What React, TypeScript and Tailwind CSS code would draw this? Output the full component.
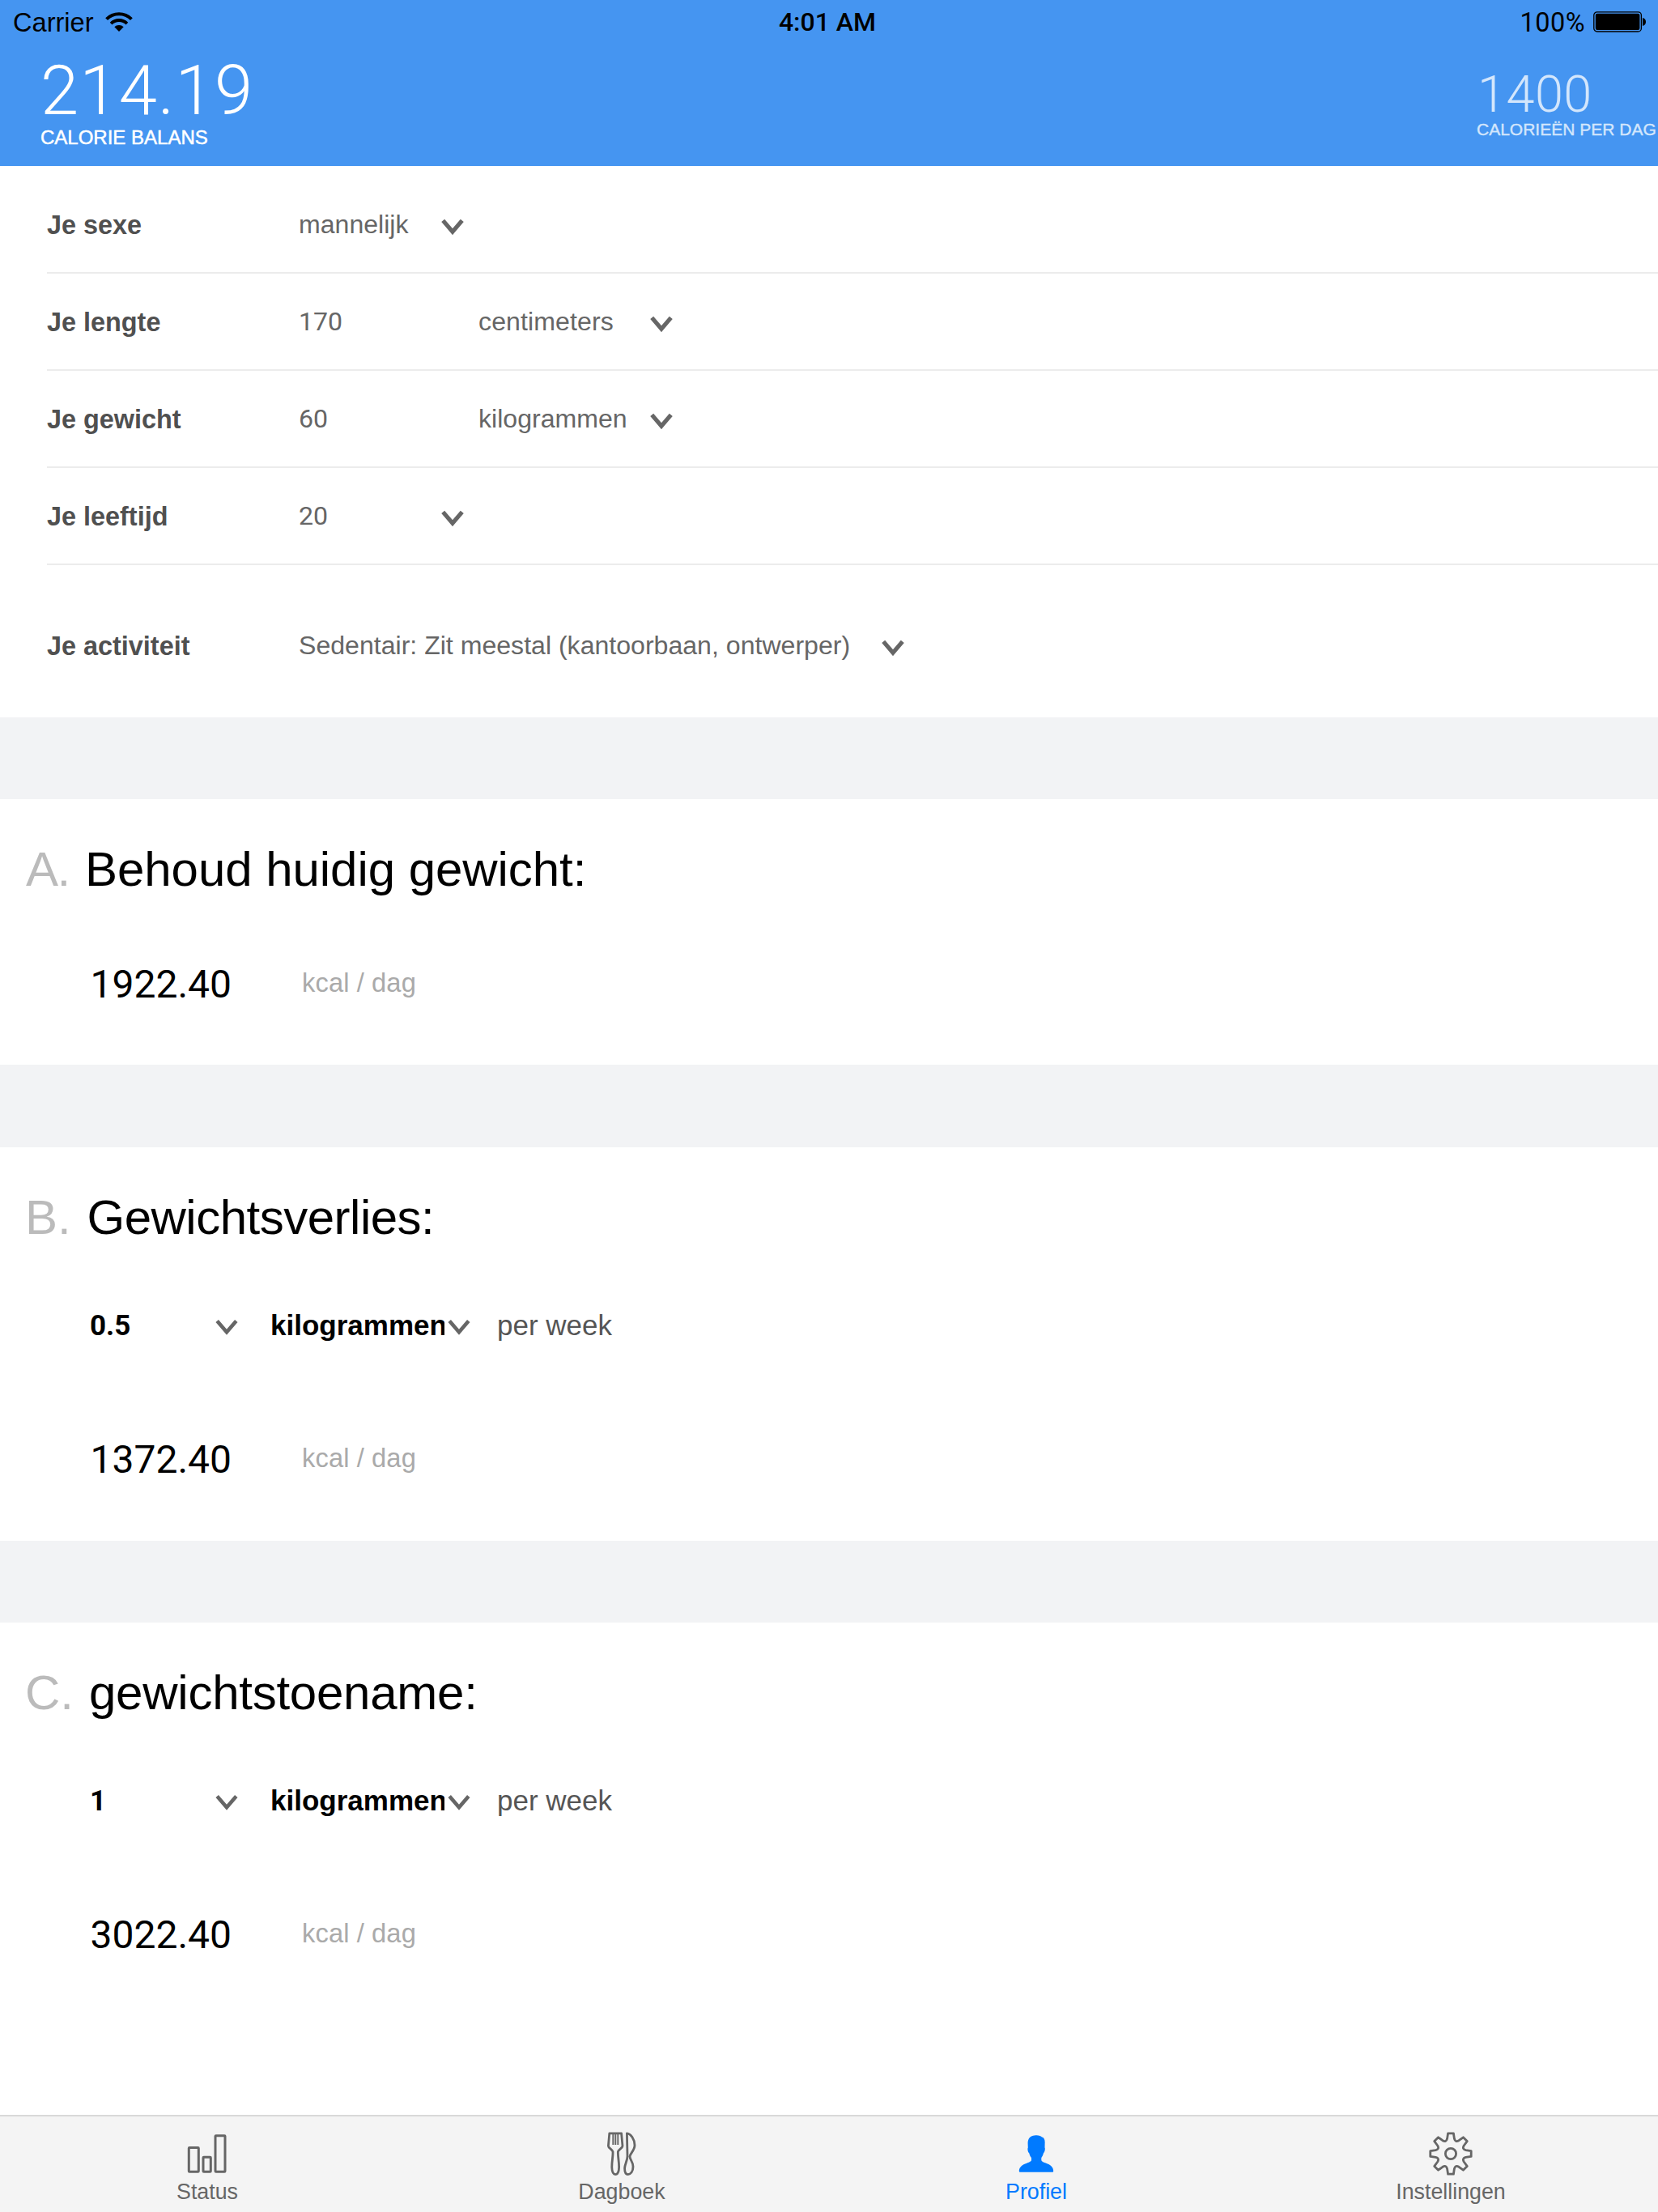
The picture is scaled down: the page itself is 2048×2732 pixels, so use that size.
import type { ReactNode } from 'react';

const SANS = "font-['Liberation_Sans',Arial,sans-serif]";
const DIGITS = "font-[Roboto,'Liberation_Sans',sans-serif]";

function Chevron({ thin = false }: { thin?: boolean }) {
  return (
    <svg width="28" height="20" viewBox="0 0 28 20" className="shrink-0" fill="none" stroke="#666666">
      <path d="M2.2 2.4 L14 16.2 L25.8 2.4" strokeWidth={thin ? 4.6 : 5.2} />
    </svg>
  );
}

function WifiIcon() {
  return (
    <svg width="34" height="26" viewBox="0 0 34 26" fill="none" stroke="#000">
      <path d="M1.6 9.6 A21.8 21.8 0 0 1 32.4 9.6" strokeWidth="4" />
      <path d="M7.1 15.1 A14 14 0 0 1 26.9 15.1" strokeWidth="3.8" />
      <path d="M17 25 L11.3 19.3 A8 8 0 0 1 22.7 19.3 Z" fill="#000" stroke="none" />
    </svg>
  );
}

function BatteryIcon() {
  return (
    <svg width="66" height="26" viewBox="0 0 66 26">
      <rect x="0.8" y="0.8" width="58.6" height="24.2" rx="4" fill="none" stroke="#000" strokeWidth="1.3" />
      <rect x="2.8" y="2.8" width="54.6" height="20.2" rx="2" />
      <path d="M61 8 Q65 9 65 13 Q65 17 61 18 Z" />
    </svg>
  );
}

function StatusIcon() {
  return (
    <svg width="60" height="56" viewBox="0 0 60 56" fill="none" stroke="#666666" strokeWidth="3">
      <rect x="7.3" y="20.4" width="12" height="29.9" rx="0.8" />
      <rect x="25" y="32.3" width="9.3" height="18" rx="0.8" />
      <rect x="40" y="5.7" width="12" height="44.6" rx="0.8" />
    </svg>
  );
}

function DiaryIcon() {
  return (
    <svg width="60" height="56" viewBox="0 0 60 56" fill="none" stroke="#666666" strokeWidth="2.8" strokeLinejoin="round">
      <path d="M14.8 2.8 H29.6 L31 18.5 C31 21 26 22.5 25.4 25.5 C25 31 26.8 38 26.6 45 C26.4 51 24.6 53.6 22.2 53.6 C19.8 53.6 18 51 17.8 45 C17.6 38 19.4 31 19 25.5 C18.4 22.5 13.4 21 13.4 18.5 Z" />
      <path d="M19.3 3 V17 M22.3 3 V17 M25.3 3 V17" strokeWidth="1.9" />
      <path d="M36.4 2.8 C41 3 46 10.5 46 17.5 C46 24 40 28 40 31.5 C40 35.5 44 38 44 44 C44 50 41 53.6 37.7 53.6 C34.4 53.6 33.6 50 33.6 46 C33.6 41 37 37 37 31 Z" />
    </svg>
  );
}

function ProfileIcon() {
  return (
    <svg width="60" height="56" viewBox="0 0 60 56" fill="#007aff">
      <path d="M29.5 5.2 C33 5 36.2 6.2 37 7.6 C39.6 8 41 10.8 40.6 15.5 L40.5 20.5 C41.3 21.5 40.6 26 39 27.3 C38.4 30 37.2 31.8 36.3 33 V36.3 C37.5 38.6 41 39 44 40.4 C49 42.6 51.2 45.5 51.2 49.6 Q51.2 50.8 50 50.8 H10 Q8.8 50.8 8.8 49.6 C8.8 45.5 11.2 42.6 16.2 40.4 C19.2 39 22.8 38.6 24 36.3 V33 C22.9 31.8 21.8 30 21.2 27.3 C19.6 26 18.9 21.5 19.8 20.5 L19.6 15.5 C19.3 9 23 5.4 29.5 5.2 Z" />
    </svg>
  );
}

const TEETH = [0, 45, 90, 135, 180, 225, 270, 315];

function gearPath() {
  const at = (deg: number, x: number, y: number) => {
    const a = (deg * Math.PI) / 180;
    const px = 30 + x * Math.cos(a) + y * Math.sin(a);
    const py = 28 + x * Math.sin(a) - y * Math.cos(a);
    return `${px.toFixed(2)} ${py.toFixed(2)}`;
  };
  const parts = TEETH.map((deg, i) => {
    const start = i === 0 ? 'M' : 'L';
    return `${start}${at(deg, -4.4, 18.6)} L${at(deg, -3.4, 25.2)} L${at(deg, 3.4, 25.2)} L${at(deg, 4.4, 18.6)} Q${at(deg + 22.5, 0, 14.8)} ${at(deg + 45, -4.4, 18.6)}`;
  });
  return parts.join(' ') + ' Z';
}

function SettingsIcon() {
  return (
    <svg width="60" height="56" viewBox="0 0 60 56" fill="none" stroke="#666666" strokeWidth="2.8" strokeLinejoin="round">
      <path d={gearPath()} />
      <circle cx="30" cy="28" r="6.6" />
    </svg>
  );
}

function Header() {
  return (
    <header className="h-[205px] bg-[#4595f1]">
      <div className="grid h-[54px] grid-cols-3 items-center text-[32.6px] leading-[40px] text-black">
        <div className="flex items-center pl-[16px]">
          <span className="mt-[1px]">Carrier</span>
          <span className="ml-[14px]"><WifiIcon /></span>
        </div>
        <div className={`${DIGITS} -ml-[4px] text-center text-[32px] font-medium`}>4:01 AM</div>
        <div className="flex items-center justify-end pr-[14px]">
          <span className={`${DIGITS} mt-[1px] text-[32.5px] tracking-[0.5px]`}>100%</span>
          <span className="ml-[10px]"><BatteryIcon /></span>
        </div>
      </div>
      <div className="flex justify-between text-white">
        <div className="pt-[18px] pl-[50px]">
          <div className={`${DIGITS} text-[85px] leading-[80px] font-light tracking-[1.2px]`}>214.19</div>
          <div className="mt-[6px] text-[24px] leading-[24px] [-webkit-text-stroke:0.5px_white]">CALORIE BALANS</div>
        </div>
        <div className="w-[224px] pt-[33px] whitespace-nowrap text-[#d3e6fc]">
          <div className={`${DIGITS} pl-[1px] text-[63px] leading-[60px] font-light tracking-[0.5px]`}>1400</div>
          <div className="mt-[1px] text-[21px] leading-[24px] [-webkit-text-stroke:0.4px_#d3e6fc]">CALORIEËN PER DAG</div>
        </div>
      </div>
    </header>
  );
}

function ProfileRow({ label, className, children }: { label: string; className: string; children: ReactNode }) {
  return (
    <div className={`ml-[58px] flex items-center text-[32.1px] leading-[40px] text-[#666666] ${className}`}>
      <div className="mt-[1px] w-[311px] text-[32.4px] font-bold text-[#505050]">{label}</div>
      {children}
    </div>
  );
}

const ROW = 'h-[120px] border-b-2 border-[#ececec]';

function ProfileForm() {
  return (
    <section className="h-[681px] bg-white pt-[13px]">
      <ProfileRow label="Je sexe" className={ROW}>
        <div className="w-[176px]">mannelijk</div>
        <div className="mt-[6px] flex"><Chevron /></div>
      </ProfileRow>
      <ProfileRow label="Je lengte" className={ROW}>
        <div className={`${DIGITS} w-[222px]`}>170</div>
        <div className="w-[212px] tracking-[0.1px]">centimeters</div>
        <div className="mt-[6px] flex"><Chevron /></div>
      </ProfileRow>
      <ProfileRow label="Je gewicht" className={ROW}>
        <div className={`${DIGITS} w-[222px]`}>60</div>
        <div className="w-[212px]">kilogrammen</div>
        <div className="mt-[6px] flex"><Chevron /></div>
      </ProfileRow>
      <ProfileRow label="Je leeftijd" className={ROW}>
        <div className={`${DIGITS} w-[176px]`}>20</div>
        <div className="mt-[6px] flex"><Chevron /></div>
      </ProfileRow>
      <ProfileRow label="Je activiteit" className="h-[188px] pt-[10px]">
        <div className="w-[720px]">Sedentair: Zit meestal (kantoorbaan, ontwerper)</div>
        <div className="mt-[6px] flex"><Chevron /></div>
      </ProfileRow>
    </section>
  );
}

interface HeadingProps {
  letter: string;
  title: string;
  letterClass: string;
  titleClass: string;
}

function Heading({ letter, title, letterClass, titleClass }: HeadingProps) {
  return (
    <h2 className="flex pl-[31px] text-[60px] leading-[60px] whitespace-nowrap">
      <span className={`text-[#bbbbbb] ${letterClass}`}>{letter}.</span>
      <span className={`text-black ${titleClass}`}>{title}</span>
    </h2>
  );
}

function RateRow({ amount }: { amount: string }) {
  return (
    <div className="mt-[73px] flex h-[60px] items-center pl-[111px] text-[35px] leading-[44px]">
      <div className={`${DIGITS} mt-[1px] w-[155px] font-bold text-black`}>{amount}</div>
      <div className="mt-[3px] flex"><Chevron thin /></div>
      <div className="ml-[40px] w-[214.5px] overflow-hidden font-bold text-black">kilogrammen</div>
      <div className="mt-[3px] ml-[4.5px] flex"><Chevron thin /></div>
      <div className="ml-[33px] text-[#555555]">per week</div>
    </div>
  );
}

function ValueRow({ value, className }: { value: string; className: string }) {
  return (
    <div className={`flex h-[60px] items-center pl-[111.5px] ${className}`}>
      <div className={`${DIGITS} w-[261.5px] text-[48px] leading-[60px] text-black`}>{value}</div>
      <div className="mb-[4px] text-[32.7px] leading-[40px] tracking-[0.1px] text-[#aaaaaa]">kcal / dag</div>
    </div>
  );
}

function Band({ className }: { className: string }) {
  return <div className={`bg-[#f2f3f5] ${className}`} />;
}

function Tab({ label, icon, active = false }: { label: string; icon: ReactNode; active?: boolean }) {
  return (
    <div className={`flex flex-col items-center pt-[18px] ${active ? 'text-[#007aff]' : 'text-[#666666]'}`}>
      {icon}
      <span className="mt-[3px] text-[26.8px] leading-[32px]">{label}</span>
    </div>
  );
}

export default function App() {
  return (
    <div className={`${SANS} flex h-[2732px] w-[2048px] flex-col overflow-hidden bg-white`}>
      <Header />
      <main className="flex-1">
        <ProfileForm />
        <Band className="h-[101px]" />
        <section className="h-[328px] pt-[57px]">
          <Heading letter="A" title="Behoud huidig gewicht:" letterClass="w-[72px] pl-[1px] tracking-[-1.5px]" titleClass="ml-[2px] tracking-[-0.05px]" />
          <ValueRow value="1922.40" className="mt-[82px]" />
        </section>
        <Band className="h-[102px]" />
        <section className="h-[486px] pt-[57px]">
          <Heading letter="B" title="Gewichtsverlies:" letterClass="w-[75.5px]" titleClass="ml-[1px] tracking-[-0.5px]" />
          <RateRow amount="0.5" />
          <ValueRow value="1372.40" className="mt-[106px]" />
        </section>
        <Band className="h-[101px]" />
        <section className="pt-[57px]">
          <Heading letter="C" title="gewichtstoename:" letterClass="w-[78px]" titleClass="ml-[1px] tracking-[-0.25px]" />
          <RateRow amount="1" />
          <ValueRow value="3022.40" className="mt-[106px]" />
        </section>
      </main>
      <nav className="grid h-[120px] grid-cols-4 border-t-2 border-[#d9d9d9] bg-[#f4f4f4]">
        <Tab label="Status" icon={<StatusIcon />} />
        <Tab label="Dagboek" icon={<DiaryIcon />} />
        <Tab label="Profiel" icon={<ProfileIcon />} active />
        <Tab label="Instellingen" icon={<SettingsIcon />} />
      </nav>
    </div>
  );
}
